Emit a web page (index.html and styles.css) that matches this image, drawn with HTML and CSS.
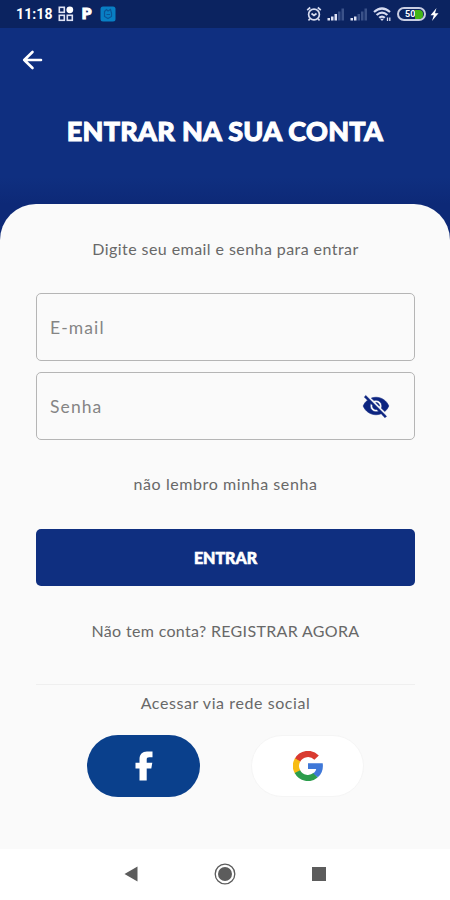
FILE: index.html
```html
<!DOCTYPE html>
<html lang="pt-BR">
<head>
	<meta charset="utf-8">
	<title>Entrar na sua conta</title>
	<link rel="stylesheet" href="styles.css">
</head>
<body>
	<div class="status">
		<span class="clock">11:18</span>
		<svg class="apps" width="16" height="16" viewBox="0 0 16 16" fill="none" stroke="#dfe3f5" stroke-width="1.6">
			<rect x="1.3" y="1.3" width="5" height="5"/>
			<rect x="1.3" y="9.3" width="5" height="5"/>
			<rect x="9.3" y="9.3" width="5" height="5"/>
			<circle cx="11.8" cy="3.8" r="3.4" fill="#fff" stroke="none"/>
		</svg>
		<span class="pay">P</span>
		<svg class="app" width="16" height="16" viewBox="0 0 16 16" fill="none">
			<rect x="0.5" y="0.5" width="15" height="15" rx="2.5" fill="#087fc4"/>
			<path d="M4.500 5.500L6.500 3.500L8 5L10.500 3.500L11.500 7V10.500L8 12.500L4.500 10.500Z M6.500 8.500H10" stroke="#0a5698" stroke-width="1.200"/>
		</svg>
		<div class="status-right">
			<svg width="16" height="16" viewBox="0 0 16 16" fill="none" stroke="#d7dcf0" stroke-width="1.7">
				<circle cx="8" cy="8.500" r="5.400"/>
				<path d="M1.200 4.200L4.200 1.500M14.800 4.200L11.800 1.500M5.500 7.500L8 9.500L10.500 7.500M3.800 12.800L2.500 14.500M12.200 12.800L13.500 14.500"/>
			</svg>
			<svg class="signal" width="18" height="13" viewBox="0 0 18 13" fill="#dfe3f5">
				<path d="M0.500 10H3V12.500H0.500zM4 8.500H6.500V12.500H4zM7.500 6H10V12.500H7.500z"/>
				<path d="M11 3.500H13.500V12.500H11zM14.500 0.500H17V12.500H14.500z" fill="#3b5289"/>
			</svg>
			<svg class="signal signal2" width="18" height="13" viewBox="0 0 18 13" fill="#dfe3f5">
				<path d="M0.500 10H3V12.500H0.500zM4 8.500H6.500V12.500H4z"/>
				<path d="M7.500 6H10V12.500H7.500zM11 3.500H13.500V12.500H11zM14.500 0.500H17V12.500H14.500z" fill="#3b5289"/>
			</svg>
			<svg class="wifi" width="19" height="15" viewBox="0 0 19 15" fill="none" stroke="#d7dcf0" stroke-width="2.2">
				<path d="M1 5Q9 -2 17 5M3.600 8Q9 3.200 14.400 8M6.200 10.800Q9 8.300 11.800 10.800"/>
				<path d="M7 11.800H11L9 14z" fill="#d7dcf0" stroke="none"/>
				<path d="M14.500 10.500V14M16.800 10.500V14" stroke-width="1.300"/>
			</svg>
			<div class="battery"><span>50</span><i></i></div>
			<svg class="bolt" width="9" height="13" viewBox="0 0 9 13"><path d="M6.500 0L0.500 7.200H3.800L2 13L8.500 5.200H5z" fill="#fff"/></svg>
		</div>
	</div>

	<div class="header">
		<a class="back" href="#">
			<svg width="21" height="20" viewBox="0 0 21 20" fill="none" stroke="#fff" stroke-width="2.600" stroke-linecap="round" stroke-linejoin="round"><path d="M10.500 2L2.200 10L10.500 18M2.200 10H19"/></svg>
		</a>
		<h1>ENTRAR NA SUA CONTA</h1>
	</div>

	<div class="card">
		<p class="intro">Digite seu email e senha para entrar</p>
		<div class="field">
			<input type="text" placeholder="E-mail">
		</div>
		<div class="field">
			<input class="senha" type="password" placeholder="Senha">
			<svg width="28" height="28" viewBox="0 0 24 24" fill="#0c2480" stroke="#0c2480" stroke-width="0.5"><path d="M12 7c2.760 0 5 2.240 5 5 0 .650-.130 1.260-.360 1.830l2.920 2.920c1.510-1.260 2.700-2.890 3.430-4.750-1.730-4.390-6-7.500-11-7.500-1.400 0-2.740.250-3.980.700l2.160 2.160C10.740 7.130 11.350 7 12 7zM2 4.270l2.280 2.280.460.460C3.080 8.300 1.780 10.020 1 12c1.730 4.390 6 7.500 11 7.500 1.550 0 3.030-.300 4.380-.840l.420.420L19.730 22 21 20.730 3.270 3 2 4.270zM7.530 9.800l1.550 1.550c-.050.210-.080.430-.080.650 0 1.660 1.340 3 3 3 .220 0 .440-.030.650-.080l1.550 1.550c-.670.330-1.410.530-2.200.530-2.760 0-5-2.240-5-5 0-.790.200-1.530.530-2.200zm4.310-.780l3.150 3.150.020-.160c0-1.660-1.340-3-3-3l-.170.010z"/></svg>
		</div>
		<p class="forgot">não lembro minha senha</p>
		<button class="entrar">ENTRAR</button>
		<p class="register">Não tem conta? REGISTRAR AGORA</p>
		<hr>
		<p class="via">Acessar via rede social</p>
		<div class="social">
			<a class="facebook" href="#">
				<svg width="18" height="30" viewBox="0 0 18 30" fill="#fff"><path d="M4.500 29.500V17.500H0.500V11.700H4.500V8.500C4.500 3.200 7.400 0.500 12 0.500H17.500V6.200H14.300C12.300 6.200 11.700 7 11.700 8.600V11.700H17.300L16.300 17.500H11.700V29.500z"/></svg>
			</a>
			<a class="google" href="#">
				<svg width="30" height="30" viewBox="0 0 30 30" fill="none" stroke-width="6.200">
					<path d="M4.390 9.400A12 12 0 0 1 23.600 6.600" stroke="#d93a30"/>
					<path d="M4.700 21.200A12 12 0 0 1 4.700 8.800" stroke="#f7bb12"/>
					<path d="M22.700 24.200A12 12 0 0 1 4.400 20.600" stroke="#2b9d4c"/>
					<path d="M15 12.200H29.700C30.500 17.500 29 22.800 24.800 26.300L20.200 22.500C21.800 21.300 22.700 20 23.200 18H15z" fill="#3f78d8"/>
				</svg>
			</a>
		</div>
	</div>

	<div class="navbar">
		<svg width="14" height="16" viewBox="0 0 14 16"><path d="M13.500 0.500V15.500L0.500 8z" fill="#5c5c5c"/></svg>
		<svg width="22" height="22" viewBox="0 0 22 22"><circle cx="11" cy="11" r="9.800" fill="none" stroke="#5c5c5c" stroke-width="1.300"/><circle cx="11" cy="11" r="7" fill="#5c5c5c"/></svg>
		<svg width="14" height="14" viewBox="0 0 14 14"><rect width="14" height="14" fill="#5c5c5c"/></svg>
	</div>
</body>
</html>
```
FILE: styles.css
```css
* {
	box-sizing: border-box;
}

body {
	margin: 0;
	height: 900px;
	display: flex;
	flex-direction: column;
	overflow: hidden;
	background: #0d2977;
	font-family: Lato, sans-serif;
	color: #686868;
}

h1, p {
	margin: 0;
}

svg {
	display: block;
	flex-shrink: 0;
}

.status {
	height: 28px;
	padding: 0 11px 0 16px;
	display: flex;
	align-items: center;
	background: #0b2360;
	color: #fff;
}

.clock {
	width: 42px;
	font: bold 14px Roboto, sans-serif;
	letter-spacing: 0.1px;
}

.pay {
	margin-left: 8px;
	width: 10px;
	font: 900 15px Roboto, sans-serif;
	-webkit-text-stroke: 1px #fff;
}

.app {
	margin-left: 8px;
}

.status-right {
	margin-left: auto;
	display: flex;
	align-items: center;
}

.signal {
	margin-left: 5px;
}

.wifi {
	margin-left: 5px;
}

.battery {
	margin-left: 5px;
	width: 29px;
	height: 14px;
	padding: 1px;
	display: flex;
	align-items: center;
	border: 2px solid #c9cee2;
	border-radius: 7px;
}

.battery span {
	width: 15px;
	padding-left: 5px;
	font: bold 9px/8px Roboto, sans-serif;
}

.battery i {
	width: 8px;
	height: 9px;
	background: #43b516;
	border-radius: 0 4px 4px 0;
}

.bolt {
	margin-left: 4px;
}

.header {
	height: 176px;
	text-align: center;
	background: linear-gradient(#0f2f80 85%, #0d2977);
}

.back {
	display: block;
	width: 44px;
	padding: 22px 0 0 22px;
}

h1 {
	margin-top: 44px;
	font-size: 27px;
	font-weight: 900;
	line-height: 34px;
	letter-spacing: 0.3px;
	-webkit-text-stroke: 1px #fff;
	color: #fff;
	white-space: nowrap;
}

.card {
	height: 645px;
	padding: 34px 35px 0 36px;
	background: #fafafa;
	border-radius: 36px 36px 0 0;
	text-align: center;
	font-size: 16px;
	line-height: 22px;
}

.card p {
	white-space: nowrap;
}

.field {
	height: 68px;
	padding: 0 24px 0 13px;
	display: flex;
	align-items: center;
	border: 1.5px solid #b5b5b5;
	border-radius: 5px;
}

.intro {
	margin-bottom: 33px;
	letter-spacing: 0.43px;
}

.field + .field {
	margin-top: 11px;
}

input {
	flex: 1;
	min-width: 0;
	padding: 0;
	border: 0;
	outline: 0;
	background: none;
	font: 17.5px Lato, sans-serif;
	letter-spacing: 1.1px;
}

input::placeholder {
	color: #858585;
}

.forgot {
	margin-top: 33px;
	letter-spacing: 0.58px;
}

.entrar {
	display: block;
	width: 100%;
	height: 57px;
	margin-top: 34px;
	border: 0;
	border-radius: 5px;
	background: #0f2f80;
	color: #fff;
	font: 900 16px Lato, sans-serif;
	-webkit-text-stroke: 0.6px #fff;
}

.register {
	margin-top: 34px;
	letter-spacing: 0.33px;
}

hr {
	margin: 42px 0 0;
	border: 0;
	border-top: 1px solid #efefef;
}

.via {
	margin-top: 7px;
	letter-spacing: 0.58px;
}

.social {
	margin-top: 21px;
	display: flex;
	justify-content: center;
	gap: 51px;
}

.social a {
	width: 113px;
	height: 62px;
	display: flex;
	align-items: center;
	justify-content: center;
	border-radius: 31px;
}

.facebook {
	background: #0a408c;
}

.google {
	background: #fff;
	border: 1px solid #f5f5f5;
}

.navbar {
	height: 51px;
	padding: 0 124px 2px;
	display: flex;
	align-items: center;
	justify-content: space-between;
	background: #fff;
}
```
